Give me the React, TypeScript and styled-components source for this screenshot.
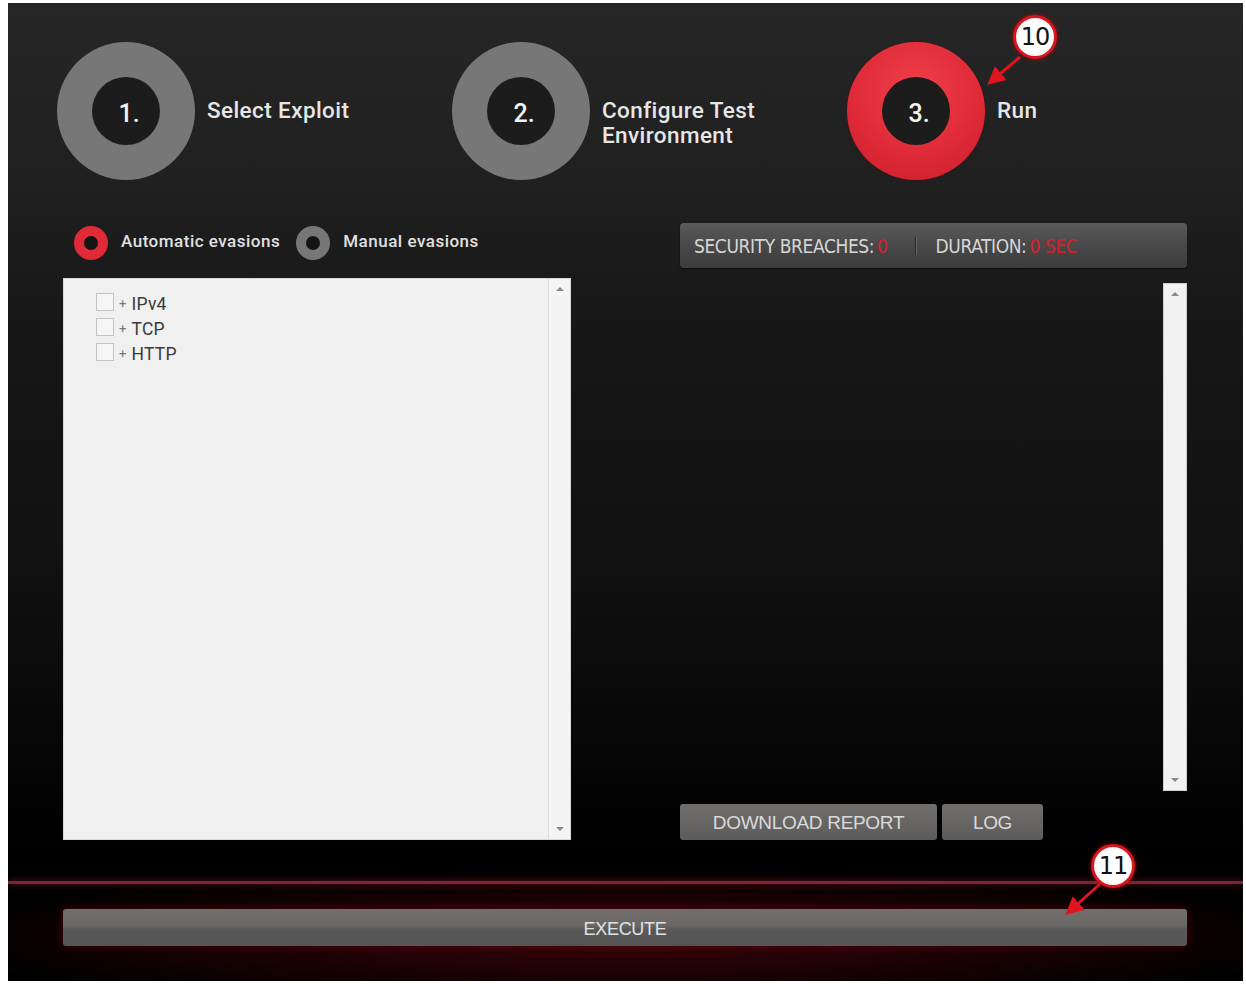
import React from "react";
import styled, { createGlobalStyle } from "styled-components";

const Global = createGlobalStyle`
  html, body { margin: 0; padding: 0; background: #ffffff; }
  body { width: 1246px; height: 984px; overflow: hidden; }
`;

const Page = styled.div`
  width: 1246px;
  height: 984px;
  background: #ffffff;
  padding: 3px 3px 3px 8px;
  box-sizing: border-box;
`;

const Frame = styled.div`
  position: relative;
  width: 1235px;
  height: 978px;
  overflow: hidden;
  display: flex;
  flex-direction: column;
  background:
    radial-gradient(ellipse 720px 70px at 50% 935px, rgba(95, 6, 14, 0.6), rgba(0,0,0,0) 100%),
    linear-gradient(180deg, #262626 0%, #202020 18%, #161616 35%, #121212 55%, #0a0a0a 70%, #000000 86%, #000000 100%);
  font-family: Roboto, "Noto Sans", "DejaVu Sans", sans-serif;
`;

const StepsRow = styled.div`
  display: flex;
  padding: 39px 0 0 49px;
`;

const Step = styled.div`
  width: 395px;
  display: flex;
  align-items: center;
  gap: 12px;
`;

const Ring = styled.div<{ $active?: boolean }>`
  width: 138px;
  height: 138px;
  border-radius: 50%;
  flex: none;
  display: flex;
  align-items: center;
  justify-content: center;
  background: ${(p) =>
    p.$active
      ? "radial-gradient(circle at 50% 35%, #f0404c 0%, #e02a38 55%, #c81e2b 100%)"
      : "#777777"};
  box-shadow: ${(p) => (p.$active ? "0 0 2px #5a0a10" : "none")};
`;

const RingCore = styled.div`
  width: 68px;
  height: 68px;
  border-radius: 50%;
  background: #1c1c1c;
  color: #f2f2f2;
  font-size: 25px;
  font-weight: 500;
  display: flex;
  align-items: center;
  justify-content: center;
  padding: 4px 0 0 6px;
  box-sizing: border-box;
`;

const StepLabel = styled.div<{ $lines: number }>`
  color: #e6e6e6;
  font-size: 22.5px;
  font-weight: 500;
  letter-spacing: 0.4px;
  line-height: 25px;
  margin-top: ${(p) => (p.$lines - 1) * 25 - 2}px;
`;

const Main = styled.div`
  display: grid;
  grid-template-columns: 508px 507px;
  column-gap: 109px;
  padding: 0 0 0 55px;
  margin-top: 43px;
`;

const LeftCol = styled.div`
  display: flex;
  flex-direction: column;
`;

const RadioRow = styled.div`
  display: flex;
  align-items: center;
  height: 34px;
  margin: 3px 0 0 11px;
`;

const RadioItem = styled.div`
  display: flex;
  align-items: center;
  gap: 13px;
  margin-right: 16px;
`;

const RadioRing = styled.div<{ $on?: boolean }>`
  width: 34px;
  height: 34px;
  border-radius: 50%;
  box-sizing: border-box;
  border: 10px solid ${(p) => (p.$on ? "#e02a38" : "#777777")};
  background: #151515;
  flex: none;
`;

const RadioLabel = styled.span`
  color: #e0e0e0;
  font-size: 17px;
  font-weight: 500;
  letter-spacing: 0.5px;
  margin-top: -4px;
`;

const TreePanel = styled.div`
  margin-top: 18px;
  height: 562px;
  background: #f0f0f0;
  border: 1px solid #d8d8d8;
  box-sizing: border-box;
  display: flex;
`;

const TreeList = styled.div`
  flex: 1;
  padding: 12px 0 0 32px;
  display: flex;
  flex-direction: column;
`;

const TreeRow = styled.div`
  display: flex;
  align-items: center;
  height: 25px;
  color: #3a3a3a;
  font-size: 17.5px;
  letter-spacing: 0.2px;
`;

const Check = styled.span`
  width: 16px;
  height: 16px;
  border: 1px solid #c4c4c4;
  background: #f6f6f6;
  margin-right: 5px;
  margin-top: -4px;
`;

const Plus = styled.span`
  font-size: 13px;
  color: #777;
  margin-right: 5px;
`;

const ScrollTrack = styled.div<{ $light?: boolean }>`
  width: 22px;
  flex: none;
  display: flex;
  flex-direction: column;
  justify-content: space-between;
  align-items: center;
  padding: 8px 0 8px;
  box-sizing: border-box;
  border-left: 1px solid ${(p) => (p.$light ? "#dcdcdc" : "#e2e2e2")};
  background: ${(p) => (p.$light ? "#f4f4f4" : "#efefef")};
`;

const Arrow = styled.span<{ $down?: boolean }>`
  width: 0;
  height: 0;
  border-left: 4px solid transparent;
  border-right: 4px solid transparent;
  ${(p) =>
    p.$down
      ? "border-top: 4px solid #8a8a8a;"
      : "border-bottom: 4px solid #8a8a8a;"}
`;

const RightCol = styled.div`
  display: flex;
  flex-direction: column;
`;

const StatsBar = styled.div`
  height: 45px;
  border-radius: 4px;
  background: linear-gradient(180deg, #5a5a5a 0%, #4a4a4a 45%, #3c3c3c 100%);
  box-shadow: 0 1px 2px rgba(0, 0, 0, 0.6);
  display: flex;
  align-items: center;
  padding-left: 14px;
  font-family: "Liberation Sans Narrow", "DejaVu Sans Condensed", Roboto, sans-serif;
  font-stretch: condensed;
  font-size: 19px;
  color: #d6d6d6;
  letter-spacing: -0.4px;
`;

const StatValue = styled.span`
  color: #d8202c;
  margin-left: 3px;
`;

const StatDivider = styled.span`
  width: 1px;
  height: 18px;
  background: #2a2a2a;
  box-shadow: 1px 0 0 #666;
  margin: 0 20px 0 27px;
`;

const LogArea = styled.div`
  display: flex;
  justify-content: flex-end;
  margin-top: 15px;
  height: 508px;
`;

const RightTrack = styled(ScrollTrack)`
  width: 24px;
  border: 1px solid #cfcfcf;
  background: #f2f2f2;
`;

const ButtonRow = styled.div`
  display: flex;
  gap: 5px;
  margin-top: 13px;
`;

const GreyButton = styled.button<{ $w: number }>`
  width: ${(p) => p.$w}px;
  height: 36px;
  border: none;
  border-radius: 3px;
  background: linear-gradient(180deg, #716d6d 0%, #686565 50%, #5c5a5a 100%);
  color: #dadada;
  font-family: "Liberation Sans", Arial, sans-serif;
  font-size: 19px;
  letter-spacing: -0.3px;
  padding: 2px 0 0;
  cursor: pointer;
`;

const RedLine = styled.div`
  height: 3px;
  margin-top: 41px;
  background: #7e2535;
  box-shadow: 0 0 6px rgba(160, 30, 50, 0.7);
`;

const ExecuteWrap = styled.div`
  padding: 25px 56px 0 55px;
`;

const ExecuteButton = styled.button`
  width: 100%;
  height: 37px;
  border: none;
  border-radius: 3px;
  background: linear-gradient(180deg, #726e6c 0%, #6a6866 45%, #585858 55%, #555555 100%);
  box-shadow: 0 0 10px rgba(120, 10, 20, 0.55);
  color: #e2e2e2;
  font-family: "Liberation Sans", Arial, sans-serif;
  font-size: 18px;
  letter-spacing: -0.3px;
  padding: 4px 0 0;
`;

const Overlay = styled.svg`
  position: absolute;
  left: 0;
  top: 0;
  pointer-events: none;
`;

const Callout = styled.div<{ $x: number; $y: number }>`
  position: absolute;
  left: ${(p) => p.$x - 22}px;
  top: ${(p) => p.$y - 22}px;
  width: 44px;
  height: 44px;
  border-radius: 50%;
  box-sizing: border-box;
  border: 3px solid #d8151f;
  background: radial-gradient(circle, #ffffff 60%, #f3d0d0 100%);
  box-shadow: 0 0 4px rgba(200, 0, 0, 0.8);
  display: flex;
  align-items: center;
  justify-content: center;
  color: #111;
  font-family: "DejaVu Sans", sans-serif;
  font-size: 24px;
  letter-spacing: -1px;
`;

const steps = [
  { n: "1.", label: ["Select Exploit"] },
  { n: "2.", label: ["Configure Test", "Environment"] },
  { n: "3.", label: ["Run"], active: true },
];

export default function App() {
  return (
    <>
      <Global />
      <Page>
        <Frame>
          <StepsRow>
            {steps.map((s) => (
              <Step key={s.n}>
                <Ring $active={s.active}>
                  <RingCore>{s.n}</RingCore>
                </Ring>
                <StepLabel $lines={s.label.length}>
                  {s.label.map((l) => (
                    <div key={l}>{l}</div>
                  ))}
                </StepLabel>
              </Step>
            ))}
          </StepsRow>

          <Main>
            <LeftCol>
              <RadioRow>
                <RadioItem>
                  <RadioRing $on />
                  <RadioLabel>Automatic evasions</RadioLabel>
                </RadioItem>
                <RadioItem>
                  <RadioRing />
                  <RadioLabel>Manual evasions</RadioLabel>
                </RadioItem>
              </RadioRow>
              <TreePanel>
                <TreeList>
                  {["IPv4", "TCP", "HTTP"].map((t) => (
                    <TreeRow key={t}>
                      <Check />
                      <Plus>+</Plus>
                      {t}
                    </TreeRow>
                  ))}
                </TreeList>
                <ScrollTrack $light>
                  <Arrow />
                  <Arrow $down />
                </ScrollTrack>
              </TreePanel>
            </LeftCol>

            <RightCol>
              <StatsBar>
                SECURITY BREACHES:<StatValue>0</StatValue>
                <StatDivider />
                DURATION:<StatValue>0 SEC</StatValue>
              </StatsBar>
              <LogArea>
                <RightTrack>
                  <Arrow />
                  <Arrow $down />
                </RightTrack>
              </LogArea>
              <ButtonRow>
                <GreyButton $w={257}>DOWNLOAD REPORT</GreyButton>
                <GreyButton $w={101}>LOG</GreyButton>
              </ButtonRow>
            </RightCol>
          </Main>

          <RedLine />
          <ExecuteWrap>
            <ExecuteButton>EXECUTE</ExecuteButton>
          </ExecuteWrap>

          <Overlay width="1235" height="978" viewBox="0 0 1235 978">
            <defs>
              <marker id="ah" markerWidth="6" markerHeight="6" refX="3" refY="3" orient="auto">
                <path d="M0,0 L6,3 L0,6 Z" fill="#e0141e" />
              </marker>
            </defs>
            <line x1="1012" y1="54" x2="986" y2="76" stroke="#e0141e" strokeWidth="3" markerEnd="url(#ah)" />
            <line x1="1092" y1="881" x2="1064" y2="906" stroke="#e0141e" strokeWidth="3" markerEnd="url(#ah)" />
          </Overlay>
          <Callout $x={1027} $y={34}>10</Callout>
          <Callout $x={1105} $y={863}>11</Callout>
        </Frame>
      </Page>
    </>
  );
}
